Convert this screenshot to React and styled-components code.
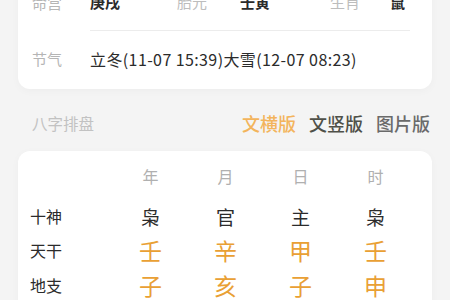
import React from 'react';
import styled, {createGlobalStyle} from 'styled-components';

const GlobalStyle = createGlobalStyle`
    html, body {
        margin: 0;
        padding: 0;
        background: #f4f4f4;
        overflow: hidden;
    }
    body {
        font-family: "Noto Sans CJK SC", "Noto Sans", sans-serif;
    }
`;

const StyledPage = styled.div`
    width: 450px;
    padding: 0 18px;
    box-sizing: border-box;
    margin-top: -26px;
`;

const StyledCard = styled.div`
    background: #ffffff;
    border-radius: 12px;
    box-shadow: 0 2px 8px rgba(0, 0, 0, 0.03);
`;

const StyledInfoCard = styled(StyledCard)`
    padding: 0 22px 2px 14px;
`;

const StyledInfoRow = styled.div`
    display: flex;
    align-items: center;
`;

const StyledInfoLabel = styled.div`
    width: 58px;
    flex-shrink: 0;
    font-size: 15px;
    line-height: 22px;
    color: #b5b5b5;
`;

const StyledInfoContent = styled.div`
    flex: 1;
    display: grid;
    grid-template-columns: ${(props) => props.$columns || '1fr'};
    align-items: center;
    padding: 17px 0;
    border-bottom: ${(props) => (props.$divider ? '1px solid #ececec' : 'none')};
`;

const StyledInfoText = styled.div`
    font-size: ${(props) => props.$size || 15}px;
    letter-spacing: ${(props) => props.$spacing || 0}px;
    line-height: 22px;
    color: ${(props) => (props.$muted ? '#bdbdbd' : '#2b2b2b')};
    font-weight: ${(props) => (props.$bold ? 700 : 400)};
    white-space: nowrap;
`;

const StyledSectionHeader = styled.div`
    display: flex;
    align-items: center;
    justify-content: space-between;
    height: 30px;
    margin: 19px 2px 13px 14px;
`;

const StyledSectionTitle = styled.div`
    font-size: 15.5px;
    color: #c2c2c2;
`;

const StyledTabs = styled.div`
    display: flex;
    gap: 13px;
`;

const StyledTab = styled.div`
    font-size: 18px;
    font-weight: 500;
    color: ${(props) => props.$color};
`;

const StyledChartCard = styled(StyledCard)`
    padding: 8px 19px 0 12px;
    height: 200px;
`;

const StyledChartRow = styled.div`
    display: grid;
    grid-template-columns: 83px repeat(4, 75px);
    align-items: center;
    height: ${(props) => props.$height}px;
    margin-bottom: ${(props) => props.$gap || 0}px;
`;

const StyledRowLabel = styled.div`
    font-size: 16px;
    color: #2b2b2b;
`;

const StyledCell = styled.div`
    text-align: center;
    font-size: ${(props) => props.$size}px;
    color: ${(props) => props.$color};
`;

const PILLARS = [
    {name: '年', god: '枭', stem: '壬', branch: '子'},
    {name: '月', god: '官', stem: '辛', branch: '亥'},
    {name: '日', god: '主', stem: '甲', branch: '子'},
    {name: '时', god: '枭', stem: '壬', branch: '申'},
];

const ORANGE = '#e9a034';

export default function App() {
    return (
        <>
            <GlobalStyle />
            <StyledPage>
                <StyledInfoCard>
                    <StyledInfoRow>
                        <StyledInfoLabel>{'命宫'}</StyledInfoLabel>
                        <StyledInfoContent $columns={'87px 63px 90px 60px 1fr'} $divider>
                            <StyledInfoText $bold>{'庚戌'}</StyledInfoText>
                            <StyledInfoText $muted>{'胎元'}</StyledInfoText>
                            <StyledInfoText $bold>{'壬寅'}</StyledInfoText>
                            <StyledInfoText $muted>{'生肖'}</StyledInfoText>
                            <StyledInfoText $bold>{'鼠'}</StyledInfoText>
                        </StyledInfoContent>
                    </StyledInfoRow>
                    <StyledInfoRow>
                        <StyledInfoLabel>{'节气'}</StyledInfoLabel>
                        <StyledInfoContent>
                            <StyledInfoText $size={16} $spacing={0.4}>
                                {'立冬(11-07 15:39)大雪(12-07 08:23)'}
                            </StyledInfoText>
                        </StyledInfoContent>
                    </StyledInfoRow>
                </StyledInfoCard>

                <StyledSectionHeader>
                    <StyledSectionTitle>{'八字排盘'}</StyledSectionTitle>
                    <StyledTabs>
                        <StyledTab $color={'#f3b45c'}>{'文横版'}</StyledTab>
                        <StyledTab $color={'#4f5048'}>{'文竖版'}</StyledTab>
                        <StyledTab $color={'#6a6a6a'}>{'图片版'}</StyledTab>
                    </StyledTabs>
                </StyledSectionHeader>

                <StyledChartCard>
                    <StyledChartRow $height={34} $gap={6}>
                        <span />
                        {PILLARS.map((pillar) => (
                            <StyledCell key={pillar.name} $size={16} $color={'#b0b0b0'}>
                                {pillar.name}
                            </StyledCell>
                        ))}
                    </StyledChartRow>
                    <StyledChartRow $height={34}>
                        <StyledRowLabel>{'十神'}</StyledRowLabel>
                        {PILLARS.map((pillar) => (
                            <StyledCell key={pillar.name} $size={19} $color={'#2b2b2b'}>
                                {pillar.god}
                            </StyledCell>
                        ))}
                    </StyledChartRow>
                    <StyledChartRow $height={32}>
                        <StyledRowLabel>{'天干'}</StyledRowLabel>
                        {PILLARS.map((pillar) => (
                            <StyledCell key={pillar.name} $size={23} $color={ORANGE}>
                                {pillar.stem}
                            </StyledCell>
                        ))}
                    </StyledChartRow>
                    <StyledChartRow $height={40}>
                        <StyledRowLabel>{'地支'}</StyledRowLabel>
                        {PILLARS.map((pillar) => (
                            <StyledCell key={pillar.name} $size={23} $color={ORANGE}>
                                {pillar.branch}
                            </StyledCell>
                        ))}
                    </StyledChartRow>
                </StyledChartCard>
            </StyledPage>
        </>
    );
}
